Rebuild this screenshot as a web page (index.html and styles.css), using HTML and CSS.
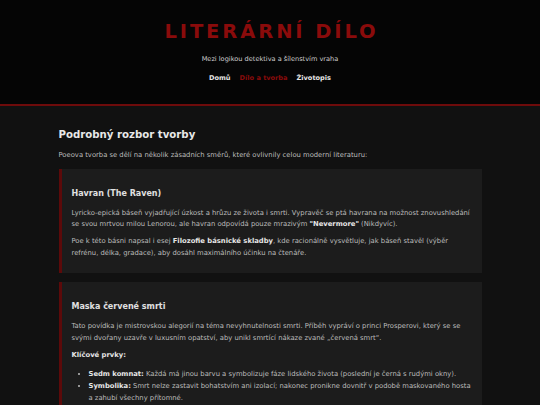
FILE: index.html
```html
<!DOCTYPE html>
<html lang="cs">
<head>
<meta charset="utf-8">
<title>Literární dílo</title>
<link rel="stylesheet" href="styles.css">
</head>
<body>
<header class="site-header">
  <h1 class="site-title">LITERÁRNÍ DÍLO</h1>
  <p class="tagline">Mezi logikou detektiva a šílenstvím vraha</p>
  <nav class="nav">
    <a href="#" class="nav-link">Domů</a>
    <a href="#" class="nav-link active">Dílo a tvorba</a>
    <a href="#" class="nav-link">Životopis</a>
  </nav>
</header>
<main class="content">
  <h2 class="page-heading">Podrobný rozbor tvorby</h2>
  <p class="intro">Poeova tvorba se dělí na několik zásadních směrů, které ovlivnily celou moderní literaturu:</p>
  <section class="card">
    <h3 class="card-title">Havran (The Raven)</h3>
    <p>Lyricko-epická báseň vyjadřující úzkost a hrůzu ze života i smrti. Vypravěč se ptá havrana na možnost znovushledání se svou mrtvou milou Lenorou, ale havran odpovídá pouze mrazivým <strong>"Nevermore"</strong> (Nikdyvíc).</p>
    <p>Poe k této básni napsal i esej <strong>Filozofie básnické skladby</strong>, kde racionálně vysvětluje, jak báseň stavěl (výběr refrénu, délka, gradace), aby dosáhl maximálního účinku na čtenáře.</p>
  </section>
  <section class="card">
    <h3 class="card-title">Maska červené smrti</h3>
    <p>Tato povídka je mistrovskou alegorií na téma nevyhnutelnosti smrti. Příběh vypráví o princi Prosperovi, který se se svými dvořany uzavře v luxusním opatství, aby unikl smrtící nákaze zvané „červená smrt“.</p>
    <p><strong>Klíčové prvky:</strong></p>
    <ul class="list">
      <li><strong>Sedm komnat:</strong> Každá má jinou barvu a symbolizuje fáze lidského života (poslední je černá s rudými okny).</li>
      <li><strong>Symbolika:</strong> Smrt nelze zastavit bohatstvím ani izolací; nakonec pronikne dovnitř v podobě maskovaného hosta a zahubí všechny přítomné.</li>
    </ul>
  </section>
</main>
</body>
</html>
```
FILE: styles.css
```css
html, body {
  margin: 0;
  padding: 0;
}
body {
  background: #111111;
  color: #bdbdbd;
  font-family: Verdana, "DejaVu Sans", sans-serif;
  font-size: 6.8px;
  line-height: 11.5px;
}
.site-header {
  background: #050505;
  border-bottom: 2px solid #6e0b0b;
  text-align: center;
  padding: 20px 0 20px;
}
.site-title {
  margin: 0;
  padding-left: 3px;
  color: #8a0b0b;
  font-size: 19.5px;
  line-height: 24px;
  letter-spacing: 2.9px;
  font-weight: bold;
}
.tagline {
  margin: 10px 0 0;
  color: #cfcfcf;
  font-size: 6.6px;
  line-height: 11px;
}
.nav {
  display: flex;
  justify-content: center;
  gap: 9px;
  margin-top: 8px;
  line-height: 11px;
}
.nav-link {
  color: #e6e6e6;
  font-weight: bold;
  text-decoration: none;
  font-size: 6.6px;
}
.nav-link.active {
  color: #8a0b0b;
}
.content {
  max-width: 423px;
  margin: 0 auto;
  padding-top: 22px;
}
.page-heading {
  margin: 0 0 8px;
  color: #e8e8e8;
  font-size: 10.2px;
  line-height: 14px;
}
.intro {
  margin: 0 0 7px;
}
.card {
  background: #1c1c1c;
  border-left: 3px solid #5c0a0a;
  padding: 19px 10px 14px;
  margin-bottom: 9px;
}
.card-title {
  margin: 0 0 8px;
  color: #e0e0e0;
  font-size: 8px;
  line-height: 12px;
}
.card p {
  margin: 0 0 5.5px;
}
.card p:last-child {
  margin-bottom: 0;
}
.card strong {
  color: #e6e6e6;
}
.list {
  margin: 7px 0 0;
  padding-left: 17px;
  line-height: 12px;
}
```
